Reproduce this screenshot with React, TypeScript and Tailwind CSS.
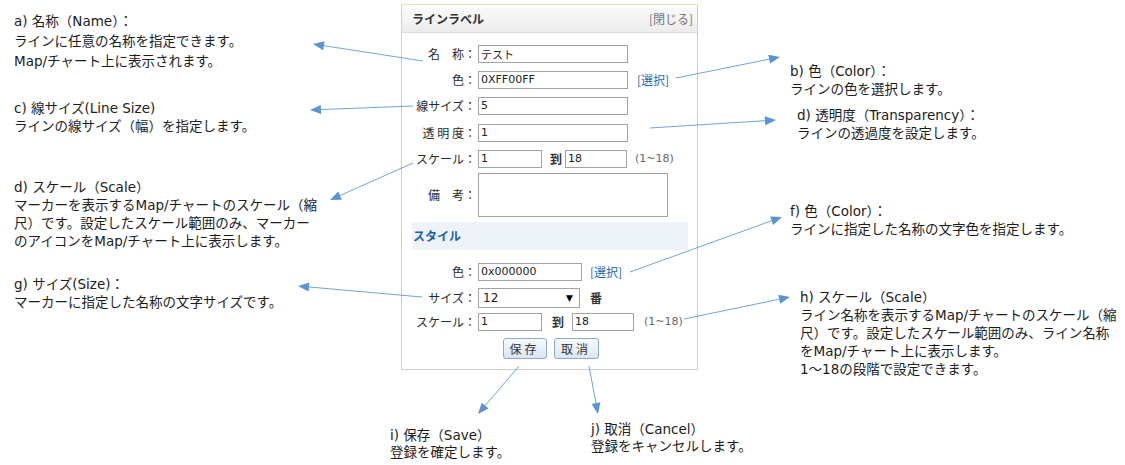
import React from "react";

const note = "absolute whitespace-nowrap text-[13.5px] text-[#1c1c1c] [font-family:'DejaVu_Sans','Noto_Sans_CJK_JP',sans-serif]";
const row = "flex items-center text-[12px] leading-[18px]";
const label = "w-[76px] shrink-0 pr-[2px] text-right text-[12px] text-[#2a2a2a]";
const field = "h-[18px] border border-[#a3a3a3] bg-white pl-[2px] text-[11px] leading-[16px] text-[#222] [font-family:'DejaVu_Sans',sans-serif]";

function Arrow({ x1, y1, x2, y2 }: { x1: number; y1: number; x2: number; y2: number }) {
  const a = Math.atan2(y2 - y1, x2 - x1);
  const c = Math.cos(a);
  const s = Math.sin(a);
  const bx = x2 - 11 * c;
  const by = y2 - 11 * s;
  const pts = `${x2},${y2} ${bx - 4.5 * s},${by + 4.5 * c} ${bx + 4.5 * s},${by - 4.5 * c}`;
  return (
    <g>
      <line x1={x1} y1={y1} x2={bx} y2={by} stroke="#72a5d6" strokeWidth={1} />
      <polygon points={pts} fill="#5b95d0" />
    </g>
  );
}

const arrows = [
  { x1: 423, y1: 61, x2: 313, y2: 44 },
  { x1: 413, y1: 106, x2: 310, y2: 110 },
  { x1: 413, y1: 163, x2: 330, y2: 200 },
  { x1: 422, y1: 297, x2: 298, y2: 286 },
  { x1: 676, y1: 78, x2: 780, y2: 57 },
  { x1: 650, y1: 128, x2: 776, y2: 120 },
  { x1: 630, y1: 272, x2: 782, y2: 217 },
  { x1: 684, y1: 319, x2: 790, y2: 297 },
  { x1: 519, y1: 366, x2: 478, y2: 414 },
  { x1: 589, y1: 366, x2: 598, y2: 414 },
];

function Select() {
  return <span className="text-[12px] text-[#1f6aa5]">[選択]</span>;
}

export default function App() {
  return (
    <div className="relative h-[465px] w-[1125px] overflow-hidden bg-white [font-family:'Noto_Sans_CJK_JP',sans-serif]">
      <div className="pl-[401px] pt-[4px]">
        <div className="flex h-[366px] w-[297px] flex-col border border-[#cfcfcf] border-t-[#e2e5c4] bg-white">
          <div className="flex h-[28px] items-center justify-between border-b border-[#dcdcdc] bg-gradient-to-b from-[#fbfbfb] to-[#ececec] pl-[10px] pr-[4px]">
            <span className="text-[12px] font-bold text-[#333]">ラインラベル</span>
            <span className="text-[12px] text-[#777]">[閉じる]</span>
          </div>

          <div className={`${row} mt-[12px]`}>
            <span className={label}>名　称：</span>
            <div className={`${field} w-[150px] [font-family:'Noto_Sans_CJK_JP',sans-serif]`}>テスト</div>
          </div>
          <div className={`${row} mt-[8px]`}>
            <span className={label}>色：</span>
            <div className={`${field} w-[150px]`}>0XFF00FF</div>
            <span className="ml-[9px]"><Select /></span>
          </div>
          <div className={`${row} mt-[8px]`}>
            <span className={label}>線サイズ：</span>
            <div className={`${field} w-[150px]`}>5</div>
          </div>
          <div className={`${row} mt-[9px]`}>
            <span className={label}>透 明 度：</span>
            <div className={`${field} w-[150px]`}>1</div>
          </div>
          <div className={`${row} mt-[8px]`}>
            <span className={label}>スケール：</span>
            <div className={`${field} w-[64px]`}>1</div>
            <span className="ml-[8px] font-bold text-[#333]">到</span>
            <div className={`${field} ml-[3px] w-[62px]`}>18</div>
            <span className="ml-[8px] text-[11px] text-[#666] [font-family:'DejaVu_Sans',sans-serif]">(1~18)</span>
          </div>
          <div className={`${row} mt-[5px]`}>
            <span className={label}>備　考：</span>
            <div className="h-[44px] w-[190px] border border-[#a3a3a3] bg-white" />
          </div>

          <div className="ml-[10px] mr-[9px] mt-[5px] flex h-[28px] items-center bg-[#eef3f9] pl-[1px]">
            <span className="text-[12px] font-bold text-[#1b5ea5]">スタイル</span>
          </div>

          <div className={`${row} mt-[13px]`}>
            <span className={label}>色：</span>
            <div className={`${field} w-[104px]`}>0x000000</div>
            <span className="ml-[8px]"><Select /></span>
          </div>
          <div className={`${row} mt-[7px]`}>
            <span className={label}>サイズ：</span>
            <div className="flex h-[20px] w-[102px] items-center justify-between border border-[#a3a3a3] bg-white pl-[4px] pr-[6px] text-[12px] text-[#222] [font-family:'DejaVu_Sans',sans-serif]">
              <span>12</span>
              <span className="text-[9px] text-black">▼</span>
            </div>
            <span className="ml-[10px] font-bold text-[#333]">番</span>
          </div>
          <div className={`${row} mt-[5px]`}>
            <span className={label}>スケール：</span>
            <div className={`${field} w-[64px]`}>1</div>
            <span className="ml-[10px] font-bold text-[#333]">到</span>
            <div className={`${field} ml-[8px] w-[62px]`}>18</div>
            <span className="ml-[10px] text-[11px] text-[#666] [font-family:'DejaVu_Sans',sans-serif]">(1~18)</span>
          </div>
          <div className="mt-[7px] flex justify-center gap-[7px] pl-[2px]">
            <button className="h-[21px] w-[44px] rounded-[3px] border border-[#8eaacb] bg-gradient-to-b from-[#f7fafd] to-[#dbe6f2] text-[12px] leading-[18px] tracking-[3px] text-[#333]">保存</button>
            <button className="h-[21px] w-[45px] rounded-[3px] border border-[#8eaacb] bg-gradient-to-b from-[#f7fafd] to-[#dbe6f2] text-[12px] leading-[18px] tracking-[3px] text-[#333]">取消</button>
          </div>
        </div>
      </div>

      <div className={`${note} left-[14px] top-[11px] leading-[20px]`}>
        a) 名称（Name）：<br />ラインに任意の名称を指定できます。<br />Map/チャート上に表示されます。
      </div>
      <div className={`${note} left-[14px] top-[99px] leading-[18px]`}>
        c) 線サイズ(Line Size)<br />ラインの線サイズ（幅）を指定します。
      </div>
      <div className={`${note} left-[14px] top-[178px] leading-[18px]`}>
        d) スケール（Scale）<br />マーカーを表示するMap/チャートのスケール（縮<br />尺）です。設定したスケール範囲のみ、マーカー<br />のアイコンをMap/チャート上に表示します。
      </div>
      <div className={`${note} left-[14px] top-[275px] leading-[18px]`}>
        g) サイズ(Size)：<br />マーカーに指定した名称の文字サイズです。
      </div>
      <div className={`${note} left-[790px] top-[62px] leading-[18px]`}>
        b) 色（Color）：<br />ラインの色を選択します。
      </div>
      <div className={`${note} left-[797px] top-[106px] leading-[18px]`}>
        d) 透明度（Transparency）：<br />ラインの透過度を設定します。
      </div>
      <div className={`${note} left-[790px] top-[202px] leading-[18px]`}>
        f) 色（Color）：<br />ラインに指定した名称の文字色を指定します。
      </div>
      <div className={`${note} left-[800px] top-[288px] leading-[18px]`}>
        h) スケール（Scale）<br />ライン名称を表示するMap/チャートのスケール（縮<br />尺）です。設定したスケール範囲のみ、ライン名称<br />をMap/チャート上に表示します。<br />1～18の段階で設定できます。
      </div>
      <div className={`${note} left-[390px] top-[427px] leading-[17px]`}>
        i) 保存（Save）<br />登録を確定します。
      </div>
      <div className={`${note} left-[591px] top-[421px] leading-[17px]`}>
        j) 取消（Cancel）<br />登録をキャンセルします。
      </div>

      <svg className="pointer-events-none absolute left-0 top-0" width={1125} height={465}>
        {arrows.map((a, i) => (
          <Arrow key={i} {...a} />
        ))}
      </svg>
    </div>
  );
}
